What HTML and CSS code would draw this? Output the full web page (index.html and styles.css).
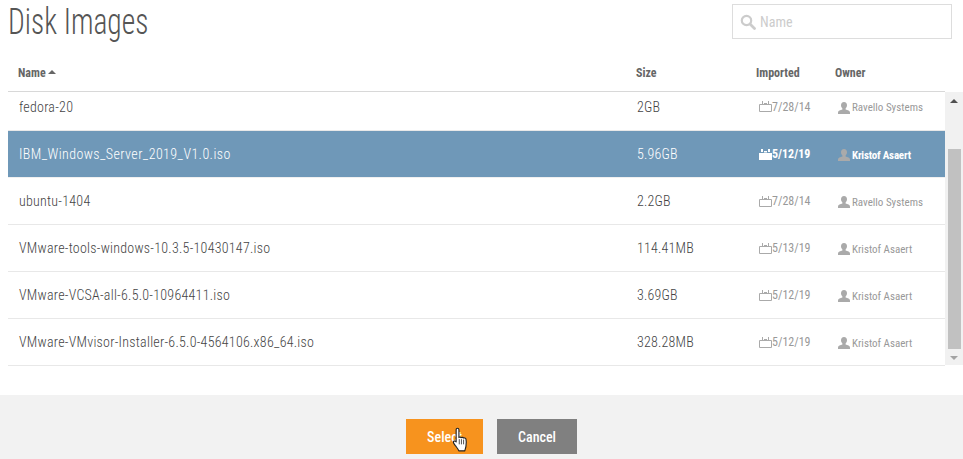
FILE: index.html
```html
<!doctype html>
<html>
<head>
<meta charset='UTF-8'>
<title>Disk Images</title>
<link rel="stylesheet" href="styles.css">
</head>
<body>
<svg class='icon-defs' width='0' height='0'>
<symbol id='icon-cal-line' viewBox='0 0 13 11'><path d='M0.5 3.500h12v7h-12z M3.500 0v4 M9.500 0v4 M5 2.500h3' fill='none' stroke='currentColor'/></symbol>
<symbol id='icon-cal-solid' viewBox='0 0 13 11'><path d='M0 4h13v7H0z M2 0h2v3H2z M9 0h2v3H9z M5 2h3v1.500H5z' fill='currentColor'/></symbol>
<symbol id='icon-user' viewBox='0 0 12 12'><path d='M6 0c2 0 3 1.400 3 3.200 0 1.300-.6 2.500-1.400 3.200v1.100C9.500 8 12 8.700 12 10.500V12H0v-1.500C0 8.700 2.500 8 4.400 7.500V6.400C3.600 5.700 3 4.500 3 3.200 3 1.400 4 0 6 0z' fill='currentColor'/></symbol>
</svg>
<div class='head'>
<h1>Disk Images</h1>
<div class='search'>
<svg class='search-icon' width='16' height='16' viewBox='0 0 16 16'><circle cx='6.500' cy='6.500' r='4.700' fill='none' stroke='currentColor' stroke-width='2.200'/><path d='M10 10l4.500 4.500' stroke='currentColor' stroke-width='2.800' stroke-linecap='round'/></svg>
<span>Name</span>
</div>
</div>
<div class='cols'>
<div class='col-name'>Name <i class='sort'></i></div>
<div class='col-size'>Size</div>
<div class='col-date'>Imported</div>
<div class='col-owner'>Owner</div>
</div>
<div class='list-wrap'>
<div class='list'>
<div class='row first'><div class='name'>fedora-20</div><div class='size'>2GB</div><div class='date'><svg class='cal'><use href='#icon-cal-line'/></svg>7/28/14</div><div class='owner'><svg class='user'><use href='#icon-user'/></svg>Ravello Systems</div></div>
<div class='row selected'><div class='name'>IBM_Windows_Server_2019_V1.0.iso</div><div class='size'>5.96GB</div><div class='date'><svg class='cal'><use href='#icon-cal-solid'/></svg>5/12/19</div><div class='owner'><svg class='user'><use href='#icon-user'/></svg>Kristof Asaert</div></div>
<div class='row'><div class='name'>ubuntu-1404</div><div class='size'>2.2GB</div><div class='date'><svg class='cal'><use href='#icon-cal-line'/></svg>7/28/14</div><div class='owner'><svg class='user'><use href='#icon-user'/></svg>Ravello Systems</div></div>
<div class='row'><div class='name'>VMware-tools-windows-10.3.5-10430147.iso</div><div class='size'>114.41MB</div><div class='date'><svg class='cal'><use href='#icon-cal-line'/></svg>5/13/19</div><div class='owner'><svg class='user'><use href='#icon-user'/></svg>Kristof Asaert</div></div>
<div class='row'><div class='name'>VMware-VCSA-all-6.5.0-10964411.iso</div><div class='size'>3.69GB</div><div class='date'><svg class='cal'><use href='#icon-cal-line'/></svg>5/12/19</div><div class='owner'><svg class='user'><use href='#icon-user'/></svg>Kristof Asaert</div></div>
<div class='row'><div class='name'>VMware-VMvisor-Installer-6.5.0-4564106.x86_64.iso</div><div class='size'>328.28MB</div><div class='date'><svg class='cal'><use href='#icon-cal-line'/></svg>5/12/19</div><div class='owner'><svg class='user'><use href='#icon-user'/></svg>Kristof Asaert</div></div>
</div>
<div class='scrollbar'>
<i class='arrow-up'></i>
<div class='thumb'></div>
<i class='arrow-down'></i>
</div>
</div>
<div class='foot'>
<button class='btn select'>Select
<svg class='hand' width='18' height='26' viewBox='0 0 20 30'><path d='M6 1.500c1 0 1.600.7 1.600 1.700v9c.5-.8 2.200-.8 2.700.2.600-.7 2.200-.6 2.700.4.700-.5 2.300-.3 2.700 1 .6 2.500.4 6 0 8.500-.3 2-1 3.500-1.300 5.200H7.500c-.7-2-2.300-3.700-4-6-.8-1.200-2.300-3-2.300-4 0-1.200 1.500-1.700 2.500-1l.7.700V3.200c0-1 .6-1.700 1.600-1.700z' fill='#fff' stroke='#222' stroke-width='1.300' stroke-linejoin='round'/><path d='M8 14v6 M10.500 14v6 M13 14.500v5.500' stroke='#222' stroke-width='.9'/></svg>
</button>
<button class='btn cancel'>Cancel</button>
</div>
</body>
</html>
```
FILE: styles.css
```css
html, body
{
margin: 0;
height: 459px;
overflow: hidden;
}

body
{
font-family: "Roboto Condensed", "Liberation Sans Narrow", Roboto, sans-serif;
background-color: white;
color: #555;
display: flex;
flex-direction: column;
}

.icon-defs
{
display: none;
}

.head
{
display: flex;
justify-content: space-between;
align-items: flex-start;
height: 66px;
padding-left: 8px;
padding-right: 11px;
}

h1
{
margin: 0;
font-size: 36px;
font-weight: 300;
line-height: 44px;
color: #555;
transform: scaleX(0.82);
transform-origin: left;
}

.search
{
box-sizing: border-box;
width: 220px;
height: 35px;
margin-top: 4px;
border: 1px solid #ddd;
display: flex;
align-items: center;
gap: 4px;
padding-left: 7px;
font-size: 14px;
color: #ccc;
}

.search-icon
{
color: #ccc;
}

.cols
{
display: flex;
height: 25px;
margin-left: 8px;
margin-right: 18px;
border-bottom: 1px solid #d8d8d8;
font-size: 12px;
font-weight: bold;
color: #666;
line-height: 15px;
}

.col-name
{
width: 628px;
padding-left: 10px;
box-sizing: border-box;
}

.col-size
{
width: 120px;
}

.col-date
{
width: 79px;
}

.sort
{
display: inline-block;
width: 0;
height: 0;
margin-bottom: 3px;
border-left: 4px solid transparent;
border-right: 4px solid transparent;
border-bottom: 4px solid #666;
}

.list-wrap
{
display: flex;
height: 274px;
margin-left: 8px;
}

.list
{
width: 937px;
}

.row
{
display: flex;
align-items: center;
box-sizing: border-box;
height: 47px;
border-bottom: 1px solid #e8e8e8;
font-size: 14px;
font-weight: 300;
color: #444;
}

.row.first
{
height: 39px;
padding-bottom: 9px;
}

.row.selected
{
height: 47px;
background-color: #6f98b8;
border-bottom-color: #f0f0f0;
color: white;
}

.name
{
width: 629px;
padding-left: 11px;
box-sizing: border-box;
letter-spacing: 0.25px;
}

.selected .name
{
letter-spacing: 0.42px;
}

.size
{
width: 122px;
letter-spacing: 0.2px;
}

.date
{
display: flex;
align-items: center;
width: 79px;
font-size: 12px;
font-weight: normal;
letter-spacing: 0;
color: #999;
}

.owner
{
display: flex;
align-items: center;
gap: 2px;
padding-top: 2px;
font-size: 11px;
font-weight: normal;
color: #999;
}

.cal
{
width: 13px;
height: 11px;
color: #aaa;
}

.user
{
width: 12px;
height: 12px;
color: #aaa;
}

.selected .date, .selected .owner
{
color: white;
font-weight: bold;
}

.selected .cal
{
color: white;
}

.selected .owner
{
letter-spacing: -0.2px;
}

.scrollbar
{
width: 18px;
height: 273px;
background-color: #f1f1f1;
display: flex;
flex-direction: column;
align-items: center;
}

.arrow-up
{
width: 0;
height: 0;
margin-top: 7px;
border-left: 4px solid transparent;
border-right: 4px solid transparent;
border-bottom: 4px solid #505050;
}

.thumb
{
width: 13px;
height: 200px;
margin-top: 46px;
background-color: #c1c1c1;
}

.arrow-down
{
width: 0;
height: 0;
margin-top: 7px;
border-left: 4px solid transparent;
border-right: 4px solid transparent;
border-top: 4px solid #a3a3a3;
}

.foot
{
flex: 1;
margin-top: 29px;
background-color: #f2f2f2;
display: flex;
justify-content: center;
align-items: flex-start;
gap: 14px;
padding-top: 24px;
padding-left: 20px;
}

.btn
{
position: relative;
height: 35px;
border: 0;
padding: 0;
font-family: inherit;
font-size: 14px;
font-weight: 500;
color: white;
}

.select
{
width: 77px;
background-color: #f7931e;
}

.cancel
{
width: 80px;
background-color: #808080;
}

.hand
{
position: absolute;
left: 46px;
top: 8px;
}
```
